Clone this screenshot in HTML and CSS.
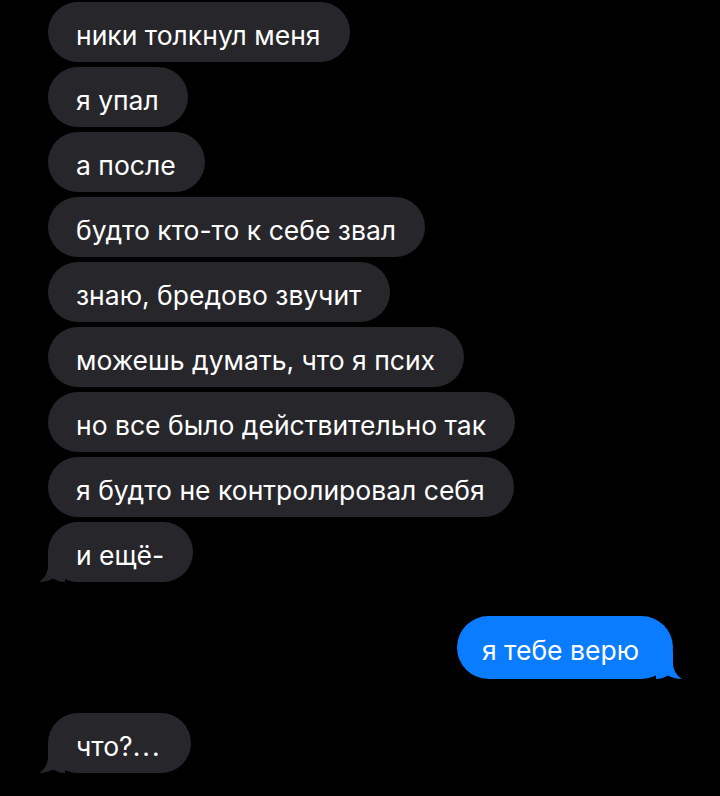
FILE: index.html
```html
<!DOCTYPE html>
<html lang="ru">
<head>
<meta charset="utf-8">
<link rel="stylesheet" href="styles.css">
</head>
<body>
<main class="thread">
  <div class="msg in">ники толкнул меня</div>
  <div class="msg in">я упал</div>
  <div class="msg in">а после</div>
  <div class="msg in">будто кто-то к себе звал</div>
  <div class="msg in">знаю, бредово звучит</div>
  <div class="msg in">можешь думать, что я псих</div>
  <div class="msg in">но все было действительно так</div>
  <div class="msg in">я будто не контролировал себя</div>
  <div class="msg in tail">и ещё-<svg class="tail-l" width="26" height="28" viewBox="0 0 26 28"><path d="M9,0 L9,12 C9,19 5,25 0,28 C5,28 10,26.5 14,24.5 C18,27 22,28 26,28 L26,0 Z"/></svg></div>
  <div class="msg out tail">я тебе верю<svg class="tail-r" width="26" height="28" viewBox="0 0 26 28"><path d="M17,0 L17,12 C17,19 21,25 26,28 C21,28 16,26.5 12,24.5 C8,27 4,28 0,28 L0,0 Z"/></svg></div>
  <div class="msg in tail last">что?<span class="dots">...</span><svg class="tail-l" width="26" height="28" viewBox="0 0 26 28"><path d="M9,0 L9,12 C9,19 5,25 0,28 C5,28 10,26.5 14,24.5 C18,27 22,28 26,28 L26,0 Z"/></svg></div>
</main>
</body>
</html>
```
FILE: styles.css
```css
html, body {
  margin: 0;
  padding: 0;
  background: #000;
}
body {
  width: 720px;
  height: 796px;
  overflow: hidden;
  font-family: Inter, "Noto Sans", sans-serif;
}
.thread {
  display: flex;
  flex-direction: column;
  align-items: flex-start;
  gap: 5px;
  padding: 2px 47px 0 48px;
}
.msg {
  position: relative;
  height: 60px;
  line-height: 54px;
  padding: 6px 29px 0 28px;
  border-radius: 30px;
  color: #fff;
  font-size: 26.5px;
  font-weight: 400;
  white-space: nowrap;
  box-sizing: border-box;
}
.msg.in {
  background: #27262b;
}
.msg.in svg path {
  fill: #27262b;
}
.msg.out {
  align-self: flex-end;
  height: 63px;
  line-height: 57px;
  border-radius: 31.5px;
  margin-top: 29px;
  padding: 6px 34px 0 25px;
  background: #0a7cff;
}
.msg.out svg path {
  fill: #0a7cff;
}
.msg.last {
  margin-top: 29px;
}
.dots {
  letter-spacing: 2px;
}
.tail-l {
  position: absolute;
  left: -9px;
  bottom: 0;
}
.tail-r {
  position: absolute;
  right: -9px;
  bottom: 0;
}
```
